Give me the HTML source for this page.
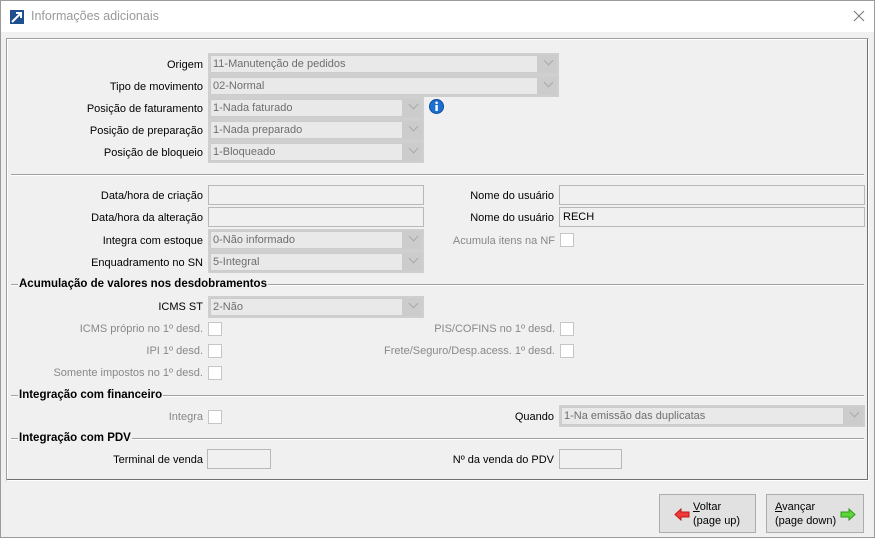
<!DOCTYPE html>
<html><head><meta charset="utf-8"><style>
*{box-sizing:border-box;margin:0;padding:0}
body{width:889px;height:545px;background:#fff;font-family:"Liberation Sans",sans-serif;font-size:11px;color:#000;position:relative;overflow:hidden}
#win{position:absolute;left:0;top:0;width:875px;height:538px;border:1px solid #9a9a9a;background:#f0f0f0}
#tb{position:absolute;left:0;top:0;width:873px;height:31px;background:#fff}
#tb .t{position:absolute;left:30px;top:8px;font-size:12.5px;color:#999}
.a{position:absolute}
#panel{position:absolute;left:6px;top:38px;width:863px;height:443px;border:1px solid #a0a0a0;border-right-color:#fff;border-bottom-color:#fff;box-shadow:inset -1px -1px 0 #707070,inset 1px 1px 0 #fff}
.l{position:absolute;text-align:right;white-space:nowrap;line-height:14px}
.g{color:#888}
.cb{position:absolute;border:2px solid #cfcfcf;background:#ccc;height:22px}
.cb .f{position:absolute;left:1px;top:1px;bottom:1px;right:20px;background:#e9e9e9;color:#6e6e6e;padding-left:2px;line-height:16px}
.cb .ar{position:absolute;right:5px;top:2px;width:7px;height:7px;border-right:1px solid #a8a8a8;border-bottom:1px solid #a8a8a8;transform:rotate(45deg)}
.in{position:absolute;border:1px solid #b8b8b8;background:#f0f0f0;height:20px;padding-left:3px;line-height:18px}
.ck{position:absolute;width:14px;height:14px;border:1px solid #c6c6c6;background:#fff}
.hr{position:absolute;height:1px;background:#a0a0a0;border-bottom:1px solid #fff;box-sizing:content-box}
.h{position:absolute;font-weight:bold;font-size:11.5px;background:#f0f0f0;padding:0 1px;line-height:14px}
.btn{position:absolute;border:1px solid #adadad;background:#e1e1e1;height:39px;line-height:14px}
</style></head><body>
<div id="win">
<div id="tb">
<svg class="a" style="left:9px;top:9px" width="14" height="14" viewBox="0 0 14 14"><rect width="14" height="14" fill="#1e4f8f"/><path d="M2 12 L11 3 M6 3 H11 V8" stroke="#fff" stroke-width="2" fill="none"/></svg>
<div class="t">Informações adicionais</div>
<svg class="a" style="left:852px;top:9px" width="12" height="12" viewBox="0 0 12 12"><path d="M1 1 L11 11 M11 1 L1 11" stroke="#777" stroke-width="1"/></svg>
</div>
</div>
<div id="panel"></div>

<div class="l" style="right:686px;top:58px">Origem</div>
<div class="cb" style="left:208px;top:53px;width:351px"><div class="f">11-Manutenção de pedidos</div><div class="ar"></div></div>
<div class="l" style="right:686px;top:80px">Tipo de movimento</div>
<div class="cb" style="left:208px;top:75px;width:351px"><div class="f">02-Normal</div><div class="ar"></div></div>
<div class="l" style="right:686px;top:102px">Posição de faturamento</div>
<div class="cb" style="left:208px;top:97px;width:216px"><div class="f">1-Nada faturado</div><div class="ar"></div></div>
<svg class="a" style="left:429px;top:99px" width="15" height="15" viewBox="0 0 15 15"><circle cx="7.5" cy="7.5" r="7" fill="#1d6fd0" stroke="#0d4a9a"/><rect x="6.4" y="6" width="2.4" height="6" fill="#fff"/><circle cx="7.6" cy="3.8" r="1.3" fill="#fff"/></svg>
<div class="l" style="right:686px;top:124px">Posição de preparação</div>
<div class="cb" style="left:208px;top:119px;width:216px"><div class="f">1-Nada preparado</div><div class="ar"></div></div>
<div class="l" style="right:686px;top:146px">Posição de bloqueio</div>
<div class="cb" style="left:208px;top:141px;width:216px"><div class="f">1-Bloqueado</div><div class="ar"></div></div>

<div class="hr" style="left:11px;top:174px;width:853px"></div>

<div class="l" style="right:686px;top:189px">Data/hora de criação</div>
<div class="in" style="left:208px;top:185px;width:216px"></div>
<div class="l" style="right:335px;top:189px">Nome do usuário</div>
<div class="in" style="left:559px;top:185px;width:306px"></div>
<div class="l" style="right:686px;top:211px">Data/hora da alteração</div>
<div class="in" style="left:208px;top:207px;width:216px"></div>
<div class="l" style="right:335px;top:211px">Nome do usuário</div>
<div class="in" style="left:559px;top:207px;width:306px">RECH</div>
<div class="l" style="right:686px;top:234px">Integra com estoque</div>
<div class="cb" style="left:208px;top:229px;width:216px"><div class="f">0-Não informado</div><div class="ar"></div></div>
<div class="l g" style="right:334px;top:234px">Acumula itens na NF</div>
<div class="ck" style="left:560px;top:233px"></div>
<div class="l" style="right:686px;top:256px">Enquadramento no SN</div>
<div class="cb" style="left:208px;top:251px;width:216px"><div class="f">5-Integral</div><div class="ar"></div></div>

<div class="hr" style="left:11px;top:284px;width:853px"></div>
<div class="h" style="left:18px;top:277px">Acumulação de valores nos desdobramentos</div>
<div class="l" style="right:686px;top:300px">ICMS ST</div>
<div class="cb" style="left:208px;top:296px;width:216px"><div class="f">2-Não</div><div class="ar"></div></div>
<div class="l g" style="right:686px;top:322px">ICMS próprio no 1º desd.</div>
<div class="ck" style="left:208px;top:322px"></div>
<div class="l g" style="right:334px;top:322px">PIS/COFINS no 1º desd.</div>
<div class="ck" style="left:560px;top:322px"></div>
<div class="l g" style="right:686px;top:344px">IPI 1º desd.</div>
<div class="ck" style="left:208px;top:344px"></div>
<div class="l g" style="right:334px;top:344px">Frete/Seguro/Desp.acess. 1º desd.</div>
<div class="ck" style="left:560px;top:344px"></div>
<div class="l g" style="right:686px;top:366px">Somente impostos no 1º desd.</div>
<div class="ck" style="left:208px;top:366px"></div>

<div class="hr" style="left:11px;top:395px;width:853px"></div>
<div class="h" style="left:18px;top:388px">Integração com financeiro</div>
<div class="l g" style="right:686px;top:410px">Integra</div>
<div class="ck" style="left:208px;top:410px"></div>
<div class="l" style="right:335px;top:410px">Quando</div>
<div class="cb" style="left:559px;top:405px;width:306px"><div class="f">1-Na emissão das duplicatas</div><div class="ar"></div></div>

<div class="hr" style="left:11px;top:438px;width:853px"></div>
<div class="h" style="left:18px;top:431px">Integração com PDV</div>
<div class="l" style="right:686px;top:453px">Terminal de venda</div>
<div class="in" style="left:207px;top:449px;width:64px"></div>
<div class="l" style="right:335px;top:453px">Nº da venda do PDV</div>
<div class="in" style="left:559px;top:449px;width:63px"></div>

<div class="btn" style="left:659px;top:494px;width:97px">
<svg class="a" style="left:14px;top:13px" width="16" height="13" viewBox="0 0 16 13"><path d="M1 6.5 L7 1 V4 H15 V9 H7 V12 Z" fill="#f03a3a" stroke="#c01818"/></svg>
<div class="a" style="left:33px;top:5px"><u>V</u>oltar<br>(page up)</div></div>
<div class="btn" style="left:766px;top:494px;width:98px">
<div class="a" style="left:8px;top:5px"><u>A</u>vançar<br>(page down)</div>
<svg class="a" style="left:73px;top:13px" width="16" height="13" viewBox="0 0 16 13"><path d="M15 6.5 L9 1 V4 H1 V9 H9 V12 Z" fill="#5ed63a" stroke="#2c9a18"/></svg></div>
</body></html>
